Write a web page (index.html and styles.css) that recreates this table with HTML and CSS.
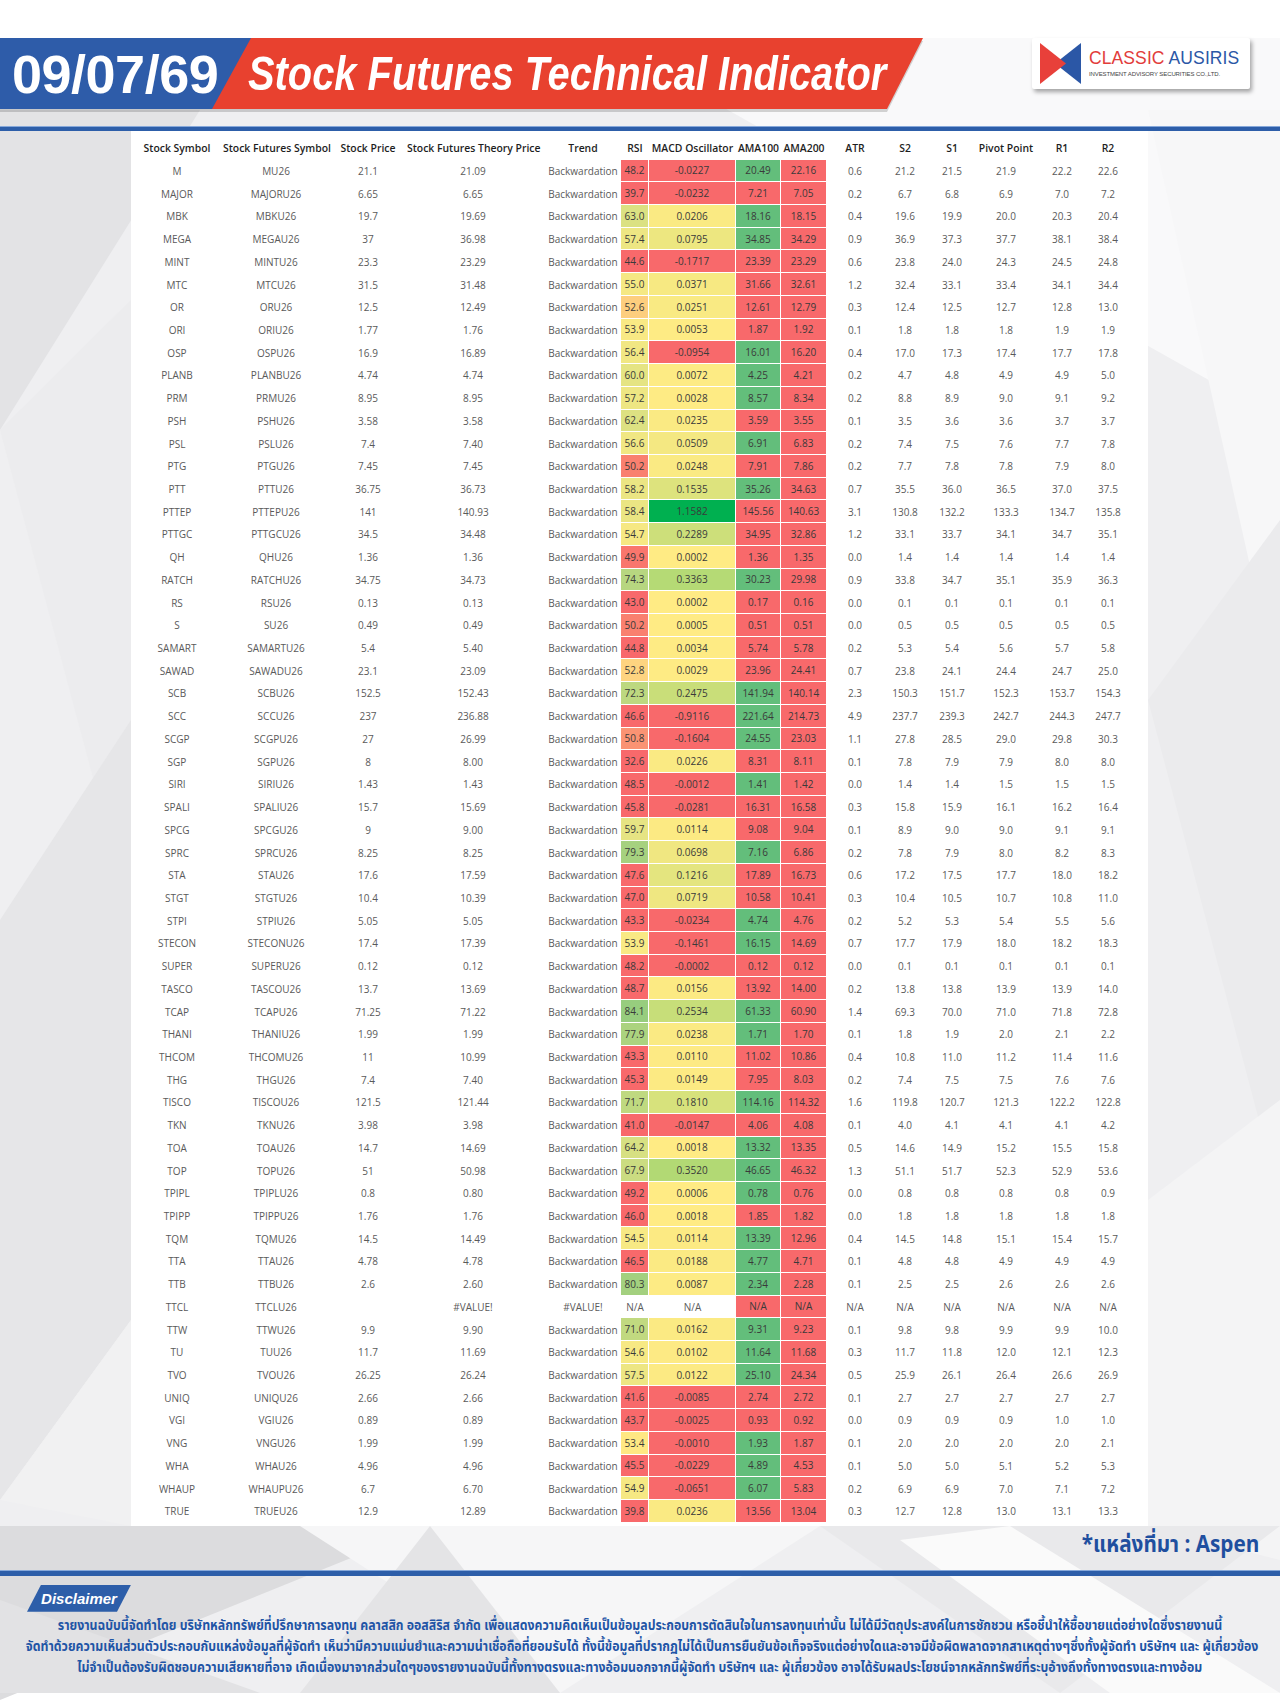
FILE: index.html
```html
<!DOCTYPE html>
<html lang="th">
<head>
<meta charset="utf-8">
<title>Stock Futures Technical Indicator</title>
<link rel="stylesheet" href="styles.css">
</head>
<body>
<div class="page">
  <svg class="bg" width="1280" height="1707" viewBox="0 0 1280 1707" aria-hidden="true">
    <rect x="0" y="38" width="1280" height="1655" fill="#efeff1"/>
    <polygon points="600,38 1280,38 1280,420" fill="#f9f9fa"/>
    <polygon points="0,110 200,110 0,430" fill="#e3e3e5"/>
    <polygon points="0,430 131,300 131,920" fill="#ececee"/>
    <polygon points="0,920 131,720 131,1320 0,1500" fill="#e6e6e8"/>
    <polygon points="0,1500 131,1320 131,1526" fill="#f1f1f2"/>
    <polygon points="1148,110 1280,110 1280,700" fill="#f7f7f8"/>
    <polygon points="1148,700 1280,520 1280,1200" fill="#ebebed"/>
    <polygon points="1148,1200 1280,1100 1280,1560 1148,1526" fill="#f4f4f5"/>
    <polygon points="0,1526 430,1526 0,1700" fill="#dcdcde"/>
    <polygon points="300,1526 820,1526 560,1693" fill="#f6f6f7"/>
    <polygon points="820,1526 1280,1526 1060,1693" fill="#e9e9eb"/>
    <polygon points="900,1540 1010,1526 1280,1693 1110,1693" fill="#fafafa"/>
    <polygon points="0,1600 260,1693 0,1693" fill="#e2e2e4"/>
    <polygon points="430,1526 560,1693 300,1693" fill="#e4e4e6"/>
  </svg>

  <div class="content">
    <header class="header">
      <div class="band-wrap">
        <div class="band">
          <div class="date">09/07/69</div>
          <div class="title">Stock Futures Technical Indicator</div>
        </div>
      </div>
      <div class="logo">
        <svg class="logo-mark" width="41" height="41" viewBox="0 0 41 41" aria-hidden="true">
          <polygon points="41,0 15,20.5 41,41" fill="#2b57a6"/>
          <polygon points="0,0 26,20.5 0,41" fill="#e8403a"/>
        </svg>
        <div class="logo-text">
          <div class="logo-name"><span class="red">CLASSIC</span> <span class="blue">AUSIRIS</span></div>
          <div class="logo-sub">INVESTMENT ADVISORY SECURITIES CO.,LTD.</div>
        </div>
      </div>
    </header>

    <div class="rule"></div>

    <section class="panel">
      <table class="data">
        <colgroup>
          <col class="w92"><col class="w106"><col class="w78"><col class="w132"><col class="w82">
          <col class="w28"><col class="w87"><col class="w45"><col class="w46">
          <col class="w56"><col class="w44"><col class="w50"><col class="w58"><col class="w54"><col class="w38">
        </colgroup>
        <thead>
          <tr>
            <th>Stock Symbol</th>
            <th>Stock Futures Symbol</th>
            <th>Stock Price</th>
            <th>Stock Futures Theory Price</th>
            <th class="trend">Trend</th>
            <th>RSI</th>
            <th>MACD Oscillator</th>
            <th>AMA100</th>
            <th>AMA200</th>
            <th>ATR</th>
            <th>S2</th>
            <th>S1</th>
            <th>Pivot Point</th>
            <th>R1</th>
            <th>R2</th>
          </tr>
        </thead>
        <tbody id="rows"></tbody>
      </table>
    </section>

    <div class="source"><span class="source-text">*แหล่งที่มา : Aspen</span></div>

    <div class="rule rule2"></div>

    <div class="badge">Disclaimer</div>

    <div class="disc">
      <p>รายงานฉบับนี้จัดทำโดย บริษัทหลักทรัพย์ที่ปรึกษาการลงทุน คลาสสิก ออสสิริส จำกัด  เพื่อแสดงความคิดเห็นเป็นข้อมูลประกอบการตัดสินใจในการลงทุนเท่านั้น ไม่ได้มีวัตถุประสงค์ในการชักชวน หรือชี้นำให้ซื้อขายแต่อย่างใดซึ่งรายงานนี้</p>
      <p class="l2">จัดทำด้วยความเห็นส่วนตัวประกอบกับแหล่งข้อมูลที่ผู้จัดทำ เห็นว่ามีความแม่นยำและความน่าเชื่อถือที่ยอมรับได้ ทั้งนี้ข้อมูลที่ปรากฏไม่ได้เป็นการยืนยันข้อเท็จจริงแต่อย่างใดและอาจมีข้อผิดพลาดจากสาเหตุต่างๆซึ่งทั้งผู้จัดทำ  บริษัทฯ  และ  ผู้เกี่ยวข้อง</p>
      <p>ไม่จำเป็นต้องรับผิดชอบความเสียหายที่อาจ เกิดเนื่องมาจากส่วนใดๆของรายงานฉบับนี้ทั้งทางตรงและทางอ้อมนอกจากนี้ผู้จัดทำ บริษัทฯ และ ผู้เกี่ยวข้อง  อาจได้รับผลประโยชน์จากหลักทรัพย์ที่ระบุอ้างถึงทั้งทางตรงและทางอ้อม</p>
    </div>
  </div>
</div>
<script src="script.js"></script>
</body>
</html>
```

FILE: styles.css
```css
* { box-sizing: border-box; }
html, body { margin: 0; padding: 0; }
body {
  width: 1280px;
  height: 1707px;
  overflow: hidden;
  background: #fff;
  font-family: "Open Sans", "Noto Sans", sans-serif;
}
.page { position: relative; width: 1280px; height: 1707px; overflow: hidden; }
.bg { position: absolute; left: 0; top: 0; z-index: 0; }
.content { position: relative; z-index: 1; padding-top: 38px; }

/* header */
.header { display: flex; align-items: flex-start; height: 71px; }
.band-wrap { filter: drop-shadow(0 3px 0 rgba(0,0,0,0.16)); }
.band {
  width: 923px;
  height: 71px;
  background: #e8412f;
  clip-path: polygon(0 0, 100% 0, 887px 100%, 0 100%);
  display: flex;
  align-items: center;
  overflow: hidden;
}
.date {
  flex: none;
  width: 251px;
  height: 100%;
  background: #2e5ca9;
  clip-path: polygon(0 0, 100% 0, 212px 100%, 0 100%);
  color: #fff;
  font: bold 54px/1 "Liberation Sans", Arial, sans-serif;
  letter-spacing: -0.5px;
  display: flex;
  align-items: center;
  padding-left: 12px;
  padding-top: 1px;
}
.title {
  flex: none;
  margin-left: -3px;
  color: #fff;
  font: italic bold 48px/1 "Liberation Sans", Arial, sans-serif;
  white-space: nowrap;
  transform: scaleX(0.83);
  transform-origin: left center;
}
.logo {
  margin-left: auto;
  margin-right: 30px;
  width: 218px;
  height: 51px;
  background: #fff;
  border-radius: 2px;
  box-shadow: 2px 3px 4px rgba(0,0,0,0.35);
  display: flex;
  align-items: center;
  padding-left: 8px;
  gap: 8px;
}
.logo-mark { flex: none; }
.logo-text { display: flex; flex-direction: column; gap: 4px; }
.logo-name { font: 17.5px/1 "Liberation Sans", Arial, sans-serif; white-space: nowrap; letter-spacing: 0.1px; }
.logo-name .red { color: #e23c3a; }
.logo-name .blue { color: #2b57a6; }
.logo-sub { font: 6px/1 "Liberation Sans", Arial, sans-serif; color: #444; white-space: nowrap; letter-spacing: -0.1px; }

/* rules */
.rule {
  margin-top: 17px;
  height: 5px;
  background: #2d5ea9;
  border-top: 1px solid #86a8da;
}
.rule2 { margin-top: 12px; height: 6px; }

/* table */
.panel {
  margin-left: 131px;
  width: 1017px;
  background: #fff;
  padding-bottom: 3px;
}
.data {
  border-collapse: separate;
  border-spacing: 0;
  table-layout: fixed;
  width: 996px;
}
.w92 { width: 92px; } .w106 { width: 106px; } .w78 { width: 78px; } .w132 { width: 132px; }
.w82 { width: 82px; } .w28 { width: 28px; } .w87 { width: 87px; } .w45 { width: 45px; }
.w46 { width: 46px; } .w56 { width: 56px; } .w44 { width: 44px; } .w50 { width: 50px; }
.w58 { width: 58px; } .w54 { width: 54px; } .w38 { width: 38px; }
.data th {
  height: 28.6px;
  padding: 5px 0 0;
  font-weight: 600;
  font-size: 10.4px;
  color: #1e1e1e;
  text-align: center;
  white-space: nowrap;
  vertical-align: middle;
}
.data td {
  height: 22.72px;
  padding: 0;
  font-size: 10px;
  color: #5a5a5a;
  text-align: center;
  white-space: nowrap;
  vertical-align: middle;
}
.data .trend { padding-left: 6px; }
.data td.hm {
  color: #3a3a3a;
  border-right: 1px solid #fff;
  border-bottom: 1px solid #fff;
}

/* source + disclaimer */
.source {
  margin-top: 6px;
  padding-right: 21px;
  display: flex;
  justify-content: flex-end;
  color: #1f4f9f;
  font: bold 23px/26px "Noto Sans Thai", "Noto Sans Thai UI", "Loma", "Garuda", "Tlwg Typo", "Noto Sans", sans-serif;
}
.source-text {
  white-space: nowrap;
  transform: scaleX(0.9);
  transform-origin: right center;
}
.badge {
  margin: 9px 0 0 27px;
  width: 104px;
  height: 27px;
  background: #2d5ea9;
  clip-path: polygon(14px 0, 100% 0, 90px 100%, 0 100%);
  color: #fff;
  font: italic bold 15px/1 "Liberation Sans", Arial, sans-serif;
  display: flex;
  align-items: center;
  justify-content: center;
}
.disc {
  margin-top: 4px;
  display: flex;
  flex-direction: column;
  align-items: center;
  color: #1f55a6;
  font: bold 14.5px/21px "Noto Sans Thai", "Noto Sans Thai UI", "Loma", "Garuda", "Tlwg Typo", "Noto Sans", sans-serif;
}
.disc p {
  flex: none;
  margin: 0;
  white-space: nowrap;
  transform: scaleX(0.85);
}
.disc p.l2 { margin-left: 4px; }
```

FILE: script.js
```js
(function () {
  var RED = [248, 105, 107], YEL = [255, 235, 132], GRN = [99, 190, 123], DG = [0, 176, 80];
  function mix(a, b, t) {
    t = Math.max(0, Math.min(1, t));
    return 'rgb(' + a.map(function (x, i) { return Math.round(x + (b[i] - x) * t); }).join(',') + ')';
  }
  function rsiC(v) {
    if (v < 49.5) return mix(RED, RED, 0);
    if (v < 53.5) return mix(RED, YEL, (v - 49.5) / 4);
    return mix(YEL, GRN, (v - 52) / 48);
  }
  function macdC(v) {
    return v < 0 ? mix(RED, RED, 0) : mix(YEL, DG, v / 1.1582);
  }
  var rows = [
    "M|MU26|21.1|21.09|48.2|-0.0227|20.49|22.16|0.6|21.2|21.5|21.9|22.2|22.6",
    "MAJOR|MAJORU26|6.65|6.65|39.7|-0.0232|7.21|7.05|0.2|6.7|6.8|6.9|7.0|7.2",
    "MBK|MBKU26|19.7|19.69|63.0|0.0206|18.16|18.15|0.4|19.6|19.9|20.0|20.3|20.4",
    "MEGA|MEGAU26|37|36.98|57.4|0.0795|34.85|34.29|0.9|36.9|37.3|37.7|38.1|38.4",
    "MINT|MINTU26|23.3|23.29|44.6|-0.1717|23.39|23.29|0.6|23.8|24.0|24.3|24.5|24.8",
    "MTC|MTCU26|31.5|31.48|55.0|0.0371|31.66|32.61|1.2|32.4|33.1|33.4|34.1|34.4",
    "OR|ORU26|12.5|12.49|52.6|0.0251|12.61|12.79|0.3|12.4|12.5|12.7|12.8|13.0",
    "ORI|ORIU26|1.77|1.76|53.9|0.0053|1.87|1.92|0.1|1.8|1.8|1.8|1.9|1.9",
    "OSP|OSPU26|16.9|16.89|56.4|-0.0954|16.01|16.20|0.4|17.0|17.3|17.4|17.7|17.8",
    "PLANB|PLANBU26|4.74|4.74|60.0|0.0072|4.25|4.21|0.2|4.7|4.8|4.9|4.9|5.0",
    "PRM|PRMU26|8.95|8.95|57.2|0.0028|8.57|8.34|0.2|8.8|8.9|9.0|9.1|9.2",
    "PSH|PSHU26|3.58|3.58|62.4|0.0235|3.59|3.55|0.1|3.5|3.6|3.6|3.7|3.7",
    "PSL|PSLU26|7.4|7.40|56.6|0.0509|6.91|6.83|0.2|7.4|7.5|7.6|7.7|7.8",
    "PTG|PTGU26|7.45|7.45|50.2|0.0248|7.91|7.86|0.2|7.7|7.8|7.8|7.9|8.0",
    "PTT|PTTU26|36.75|36.73|58.2|0.1535|35.26|34.63|0.7|35.5|36.0|36.5|37.0|37.5",
    "PTTEP|PTTEPU26|141|140.93|58.4|1.1582|145.56|140.63|3.1|130.8|132.2|133.3|134.7|135.8",
    "PTTGC|PTTGCU26|34.5|34.48|54.7|0.2289|34.95|32.86|1.2|33.1|33.7|34.1|34.7|35.1",
    "QH|QHU26|1.36|1.36|49.9|0.0002|1.36|1.35|0.0|1.4|1.4|1.4|1.4|1.4",
    "RATCH|RATCHU26|34.75|34.73|74.3|0.3363|30.23|29.98|0.9|33.8|34.7|35.1|35.9|36.3",
    "RS|RSU26|0.13|0.13|43.0|0.0002|0.17|0.16|0.0|0.1|0.1|0.1|0.1|0.1",
    "S|SU26|0.49|0.49|50.2|0.0005|0.51|0.51|0.0|0.5|0.5|0.5|0.5|0.5",
    "SAMART|SAMARTU26|5.4|5.40|44.8|0.0034|5.74|5.78|0.2|5.3|5.4|5.6|5.7|5.8",
    "SAWAD|SAWADU26|23.1|23.09|52.8|0.0029|23.96|24.41|0.7|23.8|24.1|24.4|24.7|25.0",
    "SCB|SCBU26|152.5|152.43|72.3|0.2475|141.94|140.14|2.3|150.3|151.7|152.3|153.7|154.3",
    "SCC|SCCU26|237|236.88|46.6|-0.9116|221.64|214.73|4.9|237.7|239.3|242.7|244.3|247.7",
    "SCGP|SCGPU26|27|26.99|50.8|-0.1604|24.55|23.03|1.1|27.8|28.5|29.0|29.8|30.3",
    "SGP|SGPU26|8|8.00|32.6|0.0226|8.31|8.11|0.1|7.8|7.9|7.9|8.0|8.0",
    "SIRI|SIRIU26|1.43|1.43|48.5|-0.0012|1.41|1.42|0.0|1.4|1.4|1.5|1.5|1.5",
    "SPALI|SPALIU26|15.7|15.69|45.8|-0.0281|16.31|16.58|0.3|15.8|15.9|16.1|16.2|16.4",
    "SPCG|SPCGU26|9|9.00|59.7|0.0114|9.08|9.04|0.1|8.9|9.0|9.0|9.1|9.1",
    "SPRC|SPRCU26|8.25|8.25|79.3|0.0698|7.16|6.86|0.2|7.8|7.9|8.0|8.2|8.3",
    "STA|STAU26|17.6|17.59|47.6|0.1216|17.89|16.73|0.6|17.2|17.5|17.7|18.0|18.2",
    "STGT|STGTU26|10.4|10.39|47.0|0.0719|10.58|10.41|0.3|10.4|10.5|10.7|10.8|11.0",
    "STPI|STPIU26|5.05|5.05|43.3|-0.0234|4.74|4.76|0.2|5.2|5.3|5.4|5.5|5.6",
    "STECON|STECONU26|17.4|17.39|53.9|-0.1461|16.15|14.69|0.7|17.7|17.9|18.0|18.2|18.3",
    "SUPER|SUPERU26|0.12|0.12|48.2|-0.0002|0.12|0.12|0.0|0.1|0.1|0.1|0.1|0.1",
    "TASCO|TASCOU26|13.7|13.69|48.7|0.0156|13.92|14.00|0.2|13.8|13.8|13.9|13.9|14.0",
    "TCAP|TCAPU26|71.25|71.22|84.1|0.2534|61.33|60.90|1.4|69.3|70.0|71.0|71.8|72.8",
    "THANI|THANIU26|1.99|1.99|77.9|0.0238|1.71|1.70|0.1|1.8|1.9|2.0|2.1|2.2",
    "THCOM|THCOMU26|11|10.99|43.3|0.0110|11.02|10.86|0.4|10.8|11.0|11.2|11.4|11.6",
    "THG|THGU26|7.4|7.40|45.3|0.0149|7.95|8.03|0.2|7.4|7.5|7.5|7.6|7.6",
    "TISCO|TISCOU26|121.5|121.44|71.7|0.1810|114.16|114.32|1.6|119.8|120.7|121.3|122.2|122.8",
    "TKN|TKNU26|3.98|3.98|41.0|-0.0147|4.06|4.08|0.1|4.0|4.1|4.1|4.1|4.2",
    "TOA|TOAU26|14.7|14.69|64.2|0.0018|13.32|13.35|0.5|14.6|14.9|15.2|15.5|15.8",
    "TOP|TOPU26|51|50.98|67.9|0.3520|46.65|46.32|1.3|51.1|51.7|52.3|52.9|53.6",
    "TPIPL|TPIPLU26|0.8|0.80|49.2|0.0006|0.78|0.76|0.0|0.8|0.8|0.8|0.8|0.9",
    "TPIPP|TPIPPU26|1.76|1.76|46.0|0.0018|1.85|1.82|0.0|1.8|1.8|1.8|1.8|1.8",
    "TQM|TQMU26|14.5|14.49|54.5|0.0114|13.39|12.96|0.4|14.5|14.8|15.1|15.4|15.7",
    "TTA|TTAU26|4.78|4.78|46.5|0.0188|4.77|4.71|0.1|4.8|4.8|4.9|4.9|4.9",
    "TTB|TTBU26|2.6|2.60|80.3|0.0087|2.34|2.28|0.1|2.5|2.5|2.6|2.6|2.6",
    "TTCL|TTCLU26||#VALUE!",
    "TTW|TTWU26|9.9|9.90|71.0|0.0162|9.31|9.23|0.1|9.8|9.8|9.9|9.9|10.0",
    "TU|TUU26|11.7|11.69|54.6|0.0102|11.64|11.68|0.3|11.7|11.8|12.0|12.1|12.3",
    "TVO|TVOU26|26.25|26.24|57.5|0.0122|25.10|24.34|0.5|25.9|26.1|26.4|26.6|26.9",
    "UNIQ|UNIQU26|2.66|2.66|41.6|-0.0085|2.74|2.72|0.1|2.7|2.7|2.7|2.7|2.7",
    "VGI|VGIU26|0.89|0.89|43.7|-0.0025|0.93|0.92|0.0|0.9|0.9|0.9|1.0|1.0",
    "VNG|VNGU26|1.99|1.99|53.4|-0.0010|1.93|1.87|0.1|2.0|2.0|2.0|2.0|2.1",
    "WHA|WHAU26|4.96|4.96|45.5|-0.0229|4.89|4.53|0.1|5.0|5.0|5.1|5.2|5.3",
    "WHAUP|WHAUPU26|6.7|6.70|54.9|-0.0651|6.07|5.83|0.2|6.9|6.9|7.0|7.1|7.2",
    "TRUE|TRUEU26|12.9|12.89|39.8|0.0236|13.56|13.04|0.3|12.7|12.8|13.0|13.1|13.3"
  ];
  function cell(t, bg, cls) {
    var c = [];
    if (bg) c.push('hm');
    if (cls) c.push(cls);
    return '<td' + (c.length ? ' class="' + c.join(' ') + '"' : '') + (bg ? ' style="background:' + bg + '"' : '') + '>' + t + '</td>';
  }
  var red = mix(RED, RED, 0);
  var html = '';
  rows.forEach(function (r) {
    var f = r.split('|');
    var h = '<tr>';
    if (f[3] === '#VALUE!') {
      h += cell(f[0]) + cell(f[1]) + cell('') + cell('#VALUE!') + cell('#VALUE!', null, 'trend') +
        cell('N/A') + cell('N/A') + cell('N/A', red) + cell('N/A', red);
      for (var k = 0; k < 6; k++) h += cell('N/A');
    } else {
      var price = parseFloat(f[2]);
      h += cell(f[0]) + cell(f[1]) + cell(f[2]) + cell(f[3]) + cell('Backwardation', null, 'trend');
      h += cell(f[4], rsiC(parseFloat(f[4])));
      h += cell(f[5], macdC(parseFloat(f[5])));
      h += cell(f[6], price > parseFloat(f[6]) ? mix(GRN, GRN, 0) : red);
      h += cell(f[7], red);
      for (var i = 8; i < 14; i++) h += cell(f[i]);
    }
    html += h + '</tr>';
  });
  document.getElementById('rows').innerHTML = html;
})();
```
